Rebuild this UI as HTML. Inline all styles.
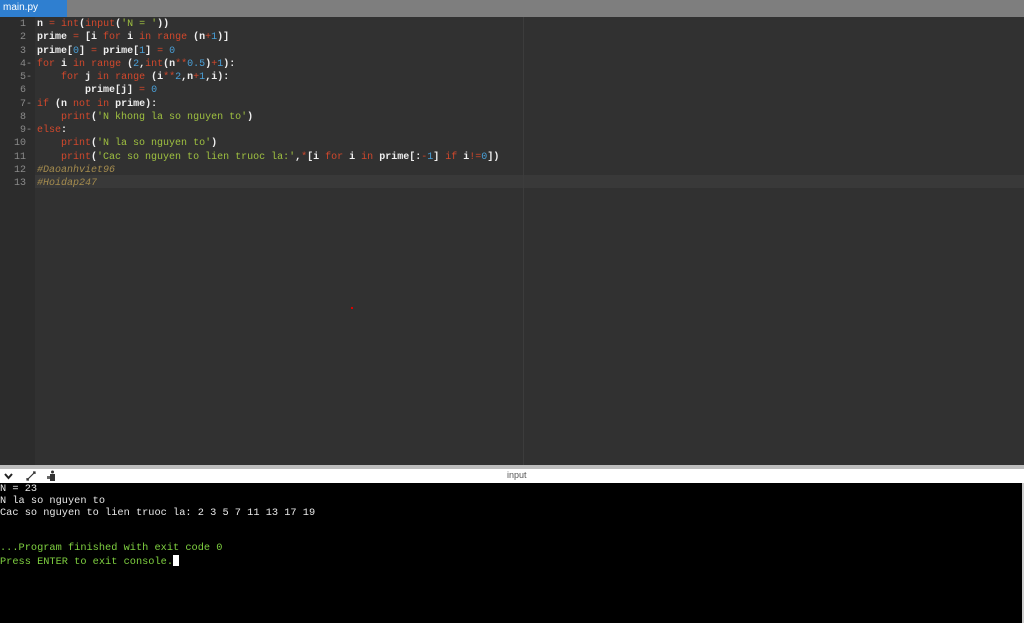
<!DOCTYPE html>
<html style="overflow:hidden"><head><meta charset="utf-8"><style>
body{margin:0;width:1024px;height:623px;overflow:hidden;background:#000;font-family:"Liberation Sans",sans-serif;position:relative}
.tabbar{position:absolute;left:0;top:0;width:1024px;height:17px;background:#7e7e7e}
.tab{position:absolute;left:0;top:0;width:67px;height:17px;background:#2f7fd0;color:#fff;font-size:10px;line-height:16px;padding-left:3px;box-sizing:border-box}
.editor{position:absolute;left:0;top:17px;width:1024px;height:448px;background:#313131;overflow:hidden}
.gutter{position:absolute;left:0;top:0;width:35px;height:448px;background:#2c2c2c}
.pm{position:absolute;left:523px;top:0;width:1px;height:448px;background:#3c3c3c}
.active{position:absolute;left:35px;top:158px;width:989px;height:13px;background:#393939}
.code{position:absolute;left:0;top:1px;font-family:"Liberation Mono",monospace;font-size:10px;line-height:13.25px;color:#f0f0f0;white-space:pre;font-weight:bold}
.ln{display:inline-block;width:26px;text-align:right;color:#8a8a8a;font-weight:normal}
.fm{display:inline-block;width:11px;color:#8a8a8a;font-weight:normal}
.k{color:#d2482c;font-weight:normal}.s{color:#9fc040;font-weight:normal}.n{color:#4aa0d8;font-weight:normal}.c{color:#a58c4e;font-style:italic;font-weight:normal}
.sep{position:absolute;left:0;top:465px;width:1024px;height:4px;background:#bdbdbd}
.tool{position:absolute;left:0;top:469px;width:1024px;height:14px;background:#fff}
.inp{position:absolute;left:507px;top:0;font-size:9px;color:#555;line-height:13px}
.con{position:absolute;left:0;top:483px;width:1022px;height:139px;padding-top:1px;background:#000;border-right:2px solid #ccc;font-family:"Liberation Mono",monospace;font-size:10.3px;line-height:11.8px;color:#e8e8e8;white-space:pre;overflow:hidden}
.g{color:#7fd040}
.cur{display:inline-block;width:6px;height:11px;background:#fff;vertical-align:-2px}
</style></head><body>
<div class="tabbar"><div class="tab">main.py</div></div>
<div class="editor">
<div class="gutter"></div><div class="active"></div><div class="pm"></div>
<div class="code"><span class="ln">1</span><span class="fm"></span>n <span class="k">=</span> <span class="k">int</span>(<span class="k">input</span>(<span class="s">'N = '</span>))
<span class="ln">2</span><span class="fm"></span>prime <span class="k">=</span> [i <span class="k">for</span> i <span class="k">in</span> <span class="k">range</span> (n<span class="k">+</span><span class="n">1</span>)]
<span class="ln">3</span><span class="fm"></span>prime[<span class="n">0</span>] <span class="k">=</span> prime[<span class="n">1</span>] <span class="k">=</span> <span class="n">0</span>
<span class="ln">4</span><span class="fm">-</span><span class="k">for</span> i <span class="k">in</span> <span class="k">range</span> (<span class="n">2</span>,<span class="k">int</span>(n<span class="k">**</span><span class="n">0.5</span>)<span class="k">+</span><span class="n">1</span>):
<span class="ln">5</span><span class="fm">-</span>    <span class="k">for</span> j <span class="k">in</span> <span class="k">range</span> (i<span class="k">**</span><span class="n">2</span>,n<span class="k">+</span><span class="n">1</span>,i):
<span class="ln">6</span><span class="fm"></span>        prime[j] <span class="k">=</span> <span class="n">0</span>
<span class="ln">7</span><span class="fm">-</span><span class="k">if</span> (n <span class="k">not</span> <span class="k">in</span> prime):
<span class="ln">8</span><span class="fm"></span>    <span class="k">print</span>(<span class="s">'N khong la so nguyen to'</span>)
<span class="ln">9</span><span class="fm">-</span><span class="k">else</span>:
<span class="ln">10</span><span class="fm"></span>    <span class="k">print</span>(<span class="s">'N la so nguyen to'</span>)
<span class="ln">11</span><span class="fm"></span>    <span class="k">print</span>(<span class="s">'Cac so nguyen to lien truoc la:'</span>,<span class="k">*</span>[i <span class="k">for</span> i <span class="k">in</span> prime[:<span class="k">-</span><span class="n">1</span>] <span class="k">if</span> i<span class="k">!=</span><span class="n">0</span>])
<span class="ln">12</span><span class="fm"></span><span class="c">#Daoanhviet96</span>
<span class="ln">13</span><span class="fm"></span><span class="c">#Hoidap247</span></div>
<div style="position:absolute;left:351px;top:290px;width:2px;height:2px;background:#d00"></div>
</div>
<div class="sep"></div>
<div class="tool">
<svg width="60" height="14" style="position:absolute;left:0;top:0">
<path d="M5 5 L8.5 9 L12 5" stroke="#222" stroke-width="2" fill="none"/>
<path d="M27 11 L35 3 M33 3 H35 V5 M27 9 V11 H29" stroke="#333" stroke-width="1.2" fill="none"/>
<rect x="50" y="5" width="5" height="7" fill="#333"/><circle cx="52.5" cy="3" r="1.5" fill="#333"/><rect x="47" y="7" width="3" height="3" fill="#666"/>
</svg>
<div class="inp">input</div>
</div>
<div class="con">N = 23
N la so nguyen to
Cac so nguyen to lien truoc la: 2 3 5 7 11 13 17 19


<span class="g">...Program finished with exit code 0</span>
<span class="g">Press ENTER to exit console.</span><span class="cur"></span></div>
</body></html>
